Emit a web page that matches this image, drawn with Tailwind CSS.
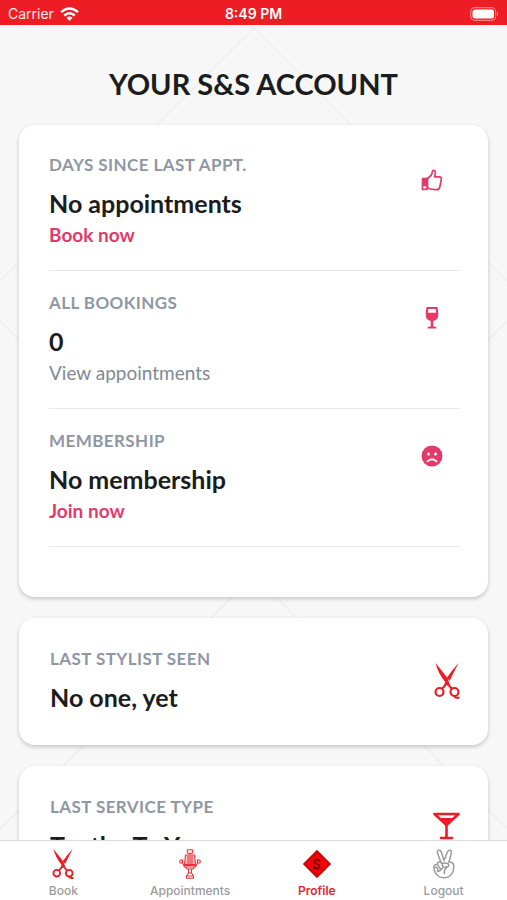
<!DOCTYPE html>
<html lang="en">
<head>
<meta charset="utf-8">
<meta name="viewport" content="width=device-width, initial-scale=1">
<title>Your S&amp;S Account</title>
<script src="https://cdn.jsdelivr.net/npm/@tailwindcss/browser@4"></script>
</head>
<body class="relative flex h-screen flex-col overflow-hidden bg-[#f7f7f7] font-['Lato',sans-serif] text-[#1b1c1d]">
<svg class="absolute inset-0 size-full" viewBox="0 0 507 900" preserveAspectRatio="xMidYMin slice" fill="none" stroke="#e5e5e5" stroke-width="1" aria-hidden="true">
  <path d="M254 28L527 301L254 575L-20 301Z"/>
  <path d="M-20 849L254 575L527 849"/>
</svg>

<header class="relative flex h-[25px] shrink-0 items-center justify-between bg-[#ee1c25] px-2 pt-[2px] font-['Inter',sans-serif] text-sm text-white">
  <div class="flex flex-1 items-center gap-[6px]">
    <span class="text-white/90">Carrier</span>
    <svg class="h-[14px] w-[19px]" viewBox="0 0 19 14" aria-hidden="true">
      <g fill="none" stroke="#fff" stroke-width="2.4"><path d="M1 5.2Q9.500 -2.400 18 5.200"/><path d="M4.200 8.500Q9.500 3.800 14.800 8.500"/></g>
      <path fill="#fff" d="M6.500 10.800Q9.500 8.300 12.500 10.800L9.500 13.900Z"/>
    </svg>
  </div>
  <time class="font-semibold">8:49 PM</time>
  <div class="flex flex-1 justify-end">
    <svg class="h-[14px] w-[29px]" viewBox="0 0 29 14" aria-hidden="true">
      <rect x=".7" y=".7" width="25" height="12.600" rx="4" fill="none" stroke="#fff" stroke-opacity=".45" stroke-width="1.200"/>
      <rect x="2.500" y="2.500" width="21.500" height="9" rx="2.500" fill="#fff"/>
      <path d="M27 4.800Q29.500 7 27 9.200Z" fill="#fff" fill-opacity=".5"/>
    </svg>
  </div>
</header>

<main class="relative min-h-0 flex-1 overflow-y-auto px-[19px] [scrollbar-width:none]">
  <h1 class="pt-[39px] pb-[21px] text-center text-[29px] leading-10 font-bold">YOUR S&amp;S ACCOUNT</h1>

  <div class="flex flex-col gap-[21px]">
    <section class="rounded-2xl bg-white pt-2 pr-7 pb-[50px] pl-[30px] shadow-[0_2px_4px_rgba(0,0,0,0.2)]">
      <div class="flex items-start justify-between border-b border-[#e6e8ea] pt-[22px] pb-[23px]">
        <div>
          <h2 class="text-[17px] leading-5 font-bold tracking-wide text-[#8e97a3]">DAYS SINCE LAST APPT.</h2>
          <p class="mt-3 text-[25px] leading-8 font-bold">No appointments</p>
          <a href="#book" class="mt-1 block text-[19px] leading-6 font-bold text-[#e43a69]">Book now</a>
        </div>
        <svg class="mt-[14px] mr-[17px] size-[22px]" viewBox="0 0 22 22" fill="none" stroke="#e43a69" stroke-width="1.700" stroke-linejoin="round" aria-hidden="true">
          <path d="M6.500 9.500L10 6.500Q11 5 11.300 2.800Q11.800 .9 13.400 1.500Q15.200 2.600 13.600 7.800H18.500Q20.600 8 20.300 10.500L18.800 18Q18.200 20.700 15.500 20.700Q10.500 20.900 6.500 19Z"/>
          <path d="M1.500 9.500H6V20.300H1.500Z"/><path fill="#e43a69" d="M2 9.800H5.500V16.500H2Z"/>
        </svg>
      </div>
      <div class="flex items-start justify-between border-b border-[#e6e8ea] pt-[22px] pb-[23px]">
        <div>
          <h2 class="text-[17px] leading-5 font-bold tracking-wide text-[#8e97a3]">ALL BOOKINGS</h2>
          <p class="mt-3 text-[25px] leading-8 font-bold">0</p>
          <a href="#appointments" class="mt-1 block text-[19px] leading-6 text-[#808995]">View appointments</a>
        </div>
        <svg class="mt-[14px] mr-[17px] size-[22px]" viewBox="0 0 22 22" fill="#e43a69" aria-hidden="true">
          <path fill-rule="evenodd" d="M5.500 0H16.500Q17.500 5 17.300 8.500Q16.800 13 12.300 14V19.300L15.500 20.200V21.500H6.500V20.200L9.700 19.300V14Q5.200 13 4.700 8.500Q4.500 5 5.500 0ZM7.300 2L7 5.800H15L14.700 2Z"/>
        </svg>
      </div>
      <div class="flex items-start justify-between border-b border-[#e6e8ea] pt-[22px] pb-[23px]">
        <div>
          <h2 class="text-[17px] leading-5 font-bold tracking-wide text-[#8e97a3]">MEMBERSHIP</h2>
          <p class="mt-3 text-[25px] leading-8 font-bold">No membership</p>
          <a href="#join" class="mt-1 block text-[19px] leading-6 font-bold text-[#e43a69]">Join now</a>
        </div>
        <svg class="mt-[14px] mr-[17px] size-[22px]" viewBox="0 0 22 22" aria-hidden="true">
          <circle cx="11" cy="11" r="10.500" fill="#e43a69"/>
          <circle cx="7.500" cy="9" r="1.500" fill="#fff"/><circle cx="14.500" cy="9" r="1.500" fill="#fff"/>
          <path d="M6.300 16.500Q11 12 15.700 16.500" fill="none" stroke="#fff" stroke-width="1.700" stroke-linecap="round"/>
        </svg>
      </div>
    </section>

    <section class="flex items-center justify-between rounded-2xl bg-white pt-[31px] pr-7 pb-8 pl-[31px] shadow-[0_2px_4px_rgba(0,0,0,0.2)]">
      <div>
        <h2 class="text-[17px] leading-5 font-bold tracking-wide text-[#8e97a3]">LAST STYLIST SEEN</h2>
        <p class="mt-3 text-[25px] leading-8 font-bold">No one, yet</p>
      </div>
      <svg class="h-9 w-[26px]" viewBox="0 0 26 36" aria-hidden="true">
        <path fill="#ee1c25" d="M1.500 0L13.500 15L15 20L12.500 21L10.500 18Q4 10 1.500 0ZM24.500 0L15.500 18L13 14.500Q18 7 24.500 0Z"/>
        <g fill="none" stroke="#ee1c25" stroke-width="2.200"><circle cx="5.500" cy="29" r="4"/><circle cx="20.500" cy="29" r="4"/><path d="M12.500 19L11 22.500L8 26M13.500 19L15 22.500L18 26M11 21.500H15M20 33Q21.500 35.500 25.500 34.500"/></g>
      </svg>
    </section>

    <section class="flex items-center justify-between rounded-2xl bg-white pt-[31px] pr-7 pb-8 pl-[31px] shadow-[0_2px_4px_rgba(0,0,0,0.2)]">
      <div>
        <h2 class="text-[17px] leading-5 font-bold tracking-wide text-[#8e97a3]">LAST SERVICE TYPE</h2>
        <p class="mt-3 text-[25px] leading-8 font-bold">Try the To You</p>
      </div>
      <svg class="h-9 w-[27px]" viewBox="0 0 27 36" aria-hidden="true">
        <path fill="none" stroke="#ee1c25" stroke-width="2.600" stroke-linecap="round" stroke-linejoin="round" d="M1.500 3H25.500L13.500 14ZM13.500 14V26.500M8 27H19"/>
        <path fill="#ee1c25" d="M5 7H22L13.500 15Z"/>
      </svg>
    </section>
  </div>
</main>

<nav class="relative grid h-[60px] shrink-0 grid-cols-4 border-t border-[#dcdcdc] bg-white font-['Inter',sans-serif] text-xs leading-4 font-medium text-[#9b9b9b]">
  <a href="#book" class="flex flex-col items-center gap-1 pt-2">
    <svg class="h-[30px] w-[22px]" viewBox="0 0 26 36" aria-hidden="true">
      <path fill="#ee1c25" d="M1.500 0L13.500 15L15 20L12.500 21L10.500 18Q4 10 1.500 0ZM24.500 0L15.500 18L13 14.500Q18 7 24.500 0Z"/>
      <g fill="none" stroke="#ee1c25" stroke-width="2.200"><circle cx="5.500" cy="29" r="4"/><circle cx="20.500" cy="29" r="4"/><path d="M12.500 19L11 22.500L8 26M13.500 19L15 22.500L18 26M11 21.500H15M20 33Q21.500 35.500 25.500 34.500"/></g>
    </svg>
    Book
  </a>
  <a href="#appointments" class="flex flex-col items-center gap-1 pt-2">
    <svg class="h-[30px] w-[22px]" viewBox="0 0 22 30" fill="none" stroke="#ee2f3a" stroke-width="1.100" stroke-linejoin="round" aria-hidden="true">
      <rect x="8.300" y=".7" width="5.400" height="3.500" rx=".8"/><path d="M11 4.200V6"/>
      <path fill="#fbc9cb" d="M6.500 6H15.500L16.500 15.500H5.500Z"/><path d="M9 7V15M11 7V15M13 7V15"/>
      <path d="M.8 11.500L1 14H3.500L5.500 18H16.500L18.500 14H21L21.200 11.500L18.500 10.500M3.500 10.500L.8 11.500M3.500 14V11M18.500 14V11M5 16.500H17M6.500 18L8 20H14L15.500 18"/>
      <path d="M9.500 20V24H12.500V20M9.500 24L7.500 27V29.300H14.500V27L12.500 24M7.500 27H14.500"/>
    </svg>
    Appointments
  </a>
  <a href="#profile" aria-current="page" class="flex flex-col items-center gap-1 pt-2 font-semibold text-[#e32636]">
    <svg class="h-[30px] w-[30px]" viewBox="0 0 30 30" aria-hidden="true">
      <path fill="#c9060c" d="M15 .8L29.200 15L15 29.200L.8 15Z"/>
      <path fill="#fb0007" d="M15 4L26 15L15 26L4 15Z"/>
      <path d="M17.700 12.800V10.500M17.700 12.500Q17 10.600 15 10.600Q12.400 10.800 12.500 12.800Q12.700 14.300 15 15Q17.700 16 17.600 17.800Q17.300 19.600 15 19.600Q12.900 19.500 12.300 17.300M12.300 17V19.900" fill="none" stroke="#6b0508" stroke-width="1.600"/>
    </svg>
    Profile
  </a>
  <a href="#logout" class="flex flex-col items-center gap-1 pt-2">
    <svg class="h-[30px] w-[22px]" viewBox="0 0 22 30" fill="none" stroke="#9b9b9b" stroke-width="1.500" stroke-linecap="round" stroke-linejoin="round" aria-hidden="true">
      <path d="M8 13.500L4.500 4Q4 1.500 5.800 1.200Q7.600 1 8.300 3L11 11.500L14.500 2.800Q15.500 .7 17.200 1.300Q18.900 2 18.300 4.200L16 13"/>
      <path d="M16 13Q19.500 12.800 20.500 15.500Q21.300 19.500 19.500 23.500Q17 28.800 11 28.800Q5 28.600 2.500 24Q.2 20 1.200 17Q2 15.200 4 15.500Q4.500 13 6.500 13Q8.500 13 9 15L10 17.500Q10.300 19.500 8.500 20Q7 20 6.300 18.500L5 16"/>
      <path d="M2 18.500Q3.500 17.500 4.500 19.500Q5.500 21.500 4.500 22.500M9 14.500Q12 13.700 14.500 14.500Q16.500 15.700 15.300 17.300Q14 18.200 11.500 18.200M14 18.500Q10.500 21 11.500 24.500M8.500 20Q7.500 22 5 22.500"/>
    </svg>
    Logout
  </a>
</nav>
</body>
</html>
